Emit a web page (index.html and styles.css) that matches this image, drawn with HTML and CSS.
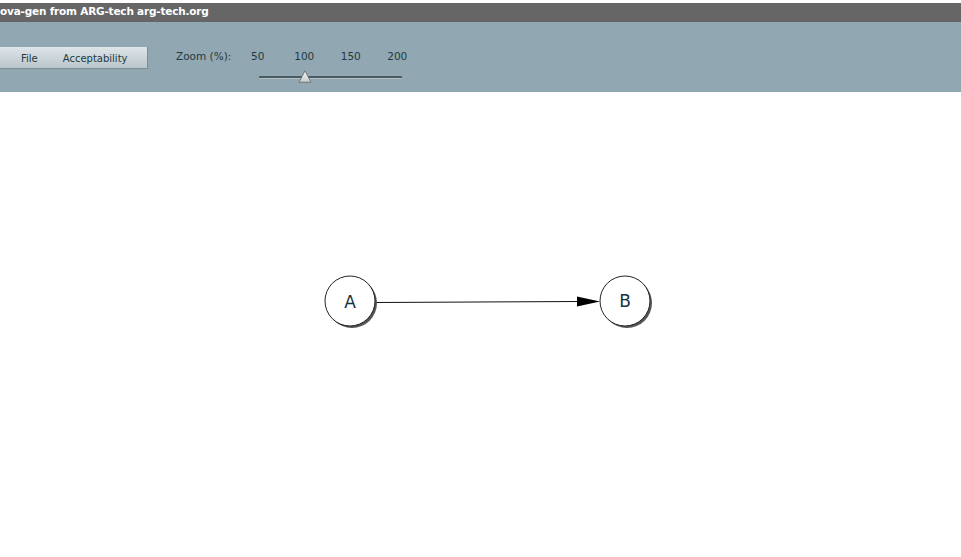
FILE: index.html
```html
<!DOCTYPE html>
<html>
<head>
<meta charset="utf-8">
<link rel="stylesheet" href="styles.css">
</head>
<body>
<div class="gap"></div>
<div class="titlebar">ova-gen from ARG-tech arg-tech.org</div>
<div class="toolbar">
  <div class="menu">
    <span class="menu-item file">File</span>
    <span class="menu-item">Acceptability</span>
  </div>
  <div class="zoom-label">Zoom (%):</div>
  <div class="slider">
    <div class="ticks">
      <span>50</span><span>100</span><span>150</span><span>200</span>
    </div>
    <div class="track">
      <svg class="thumb" width="14" height="13" viewBox="0 0 14 13">
        <defs>
          <linearGradient id="tg" x1="0" y1="0" x2="0" y2="1">
            <stop offset="0" stop-color="#f4f4f4"/>
            <stop offset="1" stop-color="#c8cccd"/>
          </linearGradient>
        </defs>
        <polygon points="7,0.8 13,12.2 1,12.2" fill="url(#tg)" stroke="#6d7579" stroke-width="1"/>
      </svg>
    </div>
  </div>
</div>
<div class="canvas">
  <svg class="graph" width="961" height="465" viewBox="0 92 961 465">
    <line x1="376" y1="302.5" x2="580" y2="301.5" stroke="#111" stroke-width="1"/>
    <polygon points="577,296.5 600,301.5 577,306.5" fill="#000"/>
    <circle cx="352" cy="303" r="25" fill="#555"/>
    <circle cx="350" cy="301" r="25" fill="#fff" stroke="#222" stroke-width="1"/>
    <text x="350" y="307.5" class="lbl" text-anchor="middle">A</text>
    <circle cx="627" cy="303" r="25" fill="#555"/>
    <circle cx="625" cy="301" r="25" fill="#fff" stroke="#222" stroke-width="1"/>
    <text x="625" y="307" class="lbl" text-anchor="middle">B</text>
  </svg>
</div>
</body>
</html>
```
FILE: styles.css
```css
html, body {
  margin: 0;
  padding: 0;
  background: #fff;
  font-family: "DejaVu Sans", Verdana, sans-serif;
}
.gap {
  height: 3px;
  background: #fff;
}
.titlebar {
  height: 19px;
  background: #666666;
  color: #fff;
  font-weight: bold;
  font-size: 10.5px;
  line-height: 17px;
  letter-spacing: -0.2px;
  white-space: nowrap;
  overflow: hidden;
}
.toolbar {
  height: 70px;
  background: #91a7b1;
  display: flex;
  align-items: flex-start;
  box-sizing: border-box;
  padding-top: 25px;
  color: #1f3a40;
  font-size: 10px;
}
.menu {
  width: 147px;
  height: 21px;
  background: linear-gradient(#dfe5e8, #b9c6cc);
  border-right: 1px solid #7f8e95;
  border-bottom: 1px solid #7f8e95;
  display: flex;
  align-items: center;
}
.menu-item {
  line-height: 21px;
  padding-top: 1px;
}
.file {
  margin-left: 21px;
  margin-right: 25px;
}
.zoom-label {
  margin-left: 28px;
  width: 62px;
  font-size: 10.5px;
  line-height: 12px;
  margin-top: 3px;
  white-space: nowrap;
}
.slider {
  display: flex;
  flex-direction: column;
}
.ticks {
  display: grid;
  grid-template-columns: repeat(4, 46.5px);
  margin-left: -3.5px;
  margin-top: 3px;
  line-height: 12px;
  font-size: 10.5px;
  text-align: center;
}
.track {
  position: relative;
  margin-left: 21px;
  margin-top: 14px;
  width: 143px;
  height: 2px;
  background: #4a5a60;
  border-bottom: 1px solid #b4c2c8;
  border-radius: 1px;
}
.thumb {
  position: absolute;
  left: 39px;
  top: -6px;
}
.canvas {
  height: 465px;
  background: #fff;
}
.graph {
  display: block;
}
.lbl {
  font-family: "DejaVu Sans", sans-serif;
  font-size: 17px;
  fill: #16343a;
}
```
